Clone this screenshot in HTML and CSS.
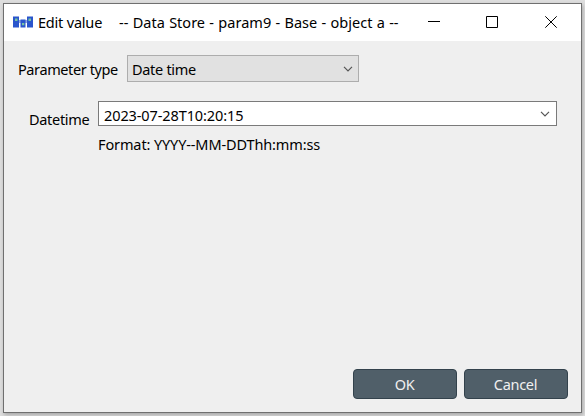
FILE: index.html
```html
<!DOCTYPE html>
<html lang="en">
<head>
<meta charset="utf-8">
<title>Edit value</title>
<link rel="stylesheet" href="styles.css">
</head>
<body>
<main class="window">
  <header class="titlebar">
    <svg class="app-icon" width="20" height="12" viewBox="0 0 20 12">
      <path d="M5 4h3v3H5zM12 4h3v3h-3z" fill="#8fa5df"/>
      <path d="M0 .5h6v11H0zM14 .5h6v11h-6zM7.500 3.500h5v8h-5z" fill="#2a55cc"/>
      <path d="M2 2.500h2.500v2.500H2zM15.500 2.500H18v2.500h-2.500zM9 7h2.300v2.200H9z" fill="#77c5a0"/>
    </svg>
    <span class="title-name">Edit value</span>
    <span class="title-detail">-- Data Store - param9 - Base - object a --</span>
    <div class="controls">
      <svg class="minimize" width="12" height="12" viewBox="0 0 12 12"><path d="M0 5.500h12"/></svg>
      <svg width="12" height="12" viewBox="0 0 12 12"><path d="M.5.500h11v11H.5z"/></svg>
      <svg width="12" height="12" viewBox="0 0 12 12"><path d="M.3.300l11.400 11.400M11.700.300L.3 11.700"/></svg>
    </div>
  </header>
  <section class="type-row">
    <span class="type-label">Parameter type</span>
    <div class="select">
      <span class="select-text">Date time</span>
      <svg class="chevron" width="10" height="6" viewBox="0 0 10 6"><path d="M1 .8l4 4 4-4"/></svg>
    </div>
  </section>
  <section class="date-row">
    <span class="date-label">Datetime</span>
    <div class="field">
      <div class="combo">
        <span class="combo-text">2023-07-28T10:20:15</span>
        <svg class="chevron" width="10" height="6" viewBox="0 0 10 6"><path d="M1 .8l4 4 4-4"/></svg>
      </div>
      <span class="hint">Format: YYYY--MM-DDThh:mm:ss</span>
    </div>
  </section>
  <footer class="actions">
    <div class="button"><span class="ok">OK</span></div>
    <div class="button"><span class="cancel">Cancel</span></div>
  </footer>
</main>
</body>
</html>
```
FILE: styles.css
```css
* { box-sizing: border-box; }
body {
  margin: 0;
  width: 585px;
  height: 416px;
  padding: 3px;
  overflow: hidden;
  background: #dedede;
  font: 14.5px/20px "Noto Sans", "Open Sans", sans-serif;
  color: #000;
}
span { white-space: nowrap; }
svg { display: block; flex: none; }
.window {
  width: 579px;
  height: 410px;
  border: 1px solid #6f6f6f;
  background: #efefef;
  box-shadow: 1px 2px 4px rgba(0, 0, 0, .25);
  display: flex;
  flex-direction: column;
}
.titlebar {
  height: 37px;
  background: #fff;
  display: flex;
  align-items: center;
  padding: 0 24px 0 9px;
}
.app-icon { margin-top: -1px; }
.title-name, .title-detail { margin-top: -2px; }
.title-name { width: 81px; margin-left: 5px; letter-spacing: -.2px; }
.title-detail { letter-spacing: .02px; word-spacing: .5px; }
.controls { display: flex; gap: 47px; margin-left: auto; margin-top: -1px; }
.controls svg { fill: none; stroke: #000; stroke-width: 1; }
.controls .minimize { margin-right: -1px; }
.type-row {
  display: flex;
  align-items: center;
  height: 27px;
  margin: 14px 0 0 14px;
}
.type-label { width: 109px; letter-spacing: -.4px; }
.select {
  width: 232px;
  height: 27px;
  border: 1px solid #adadad;
  background: #e1e1e1;
  display: flex;
  align-items: center;
  justify-content: space-between;
  padding: 0 5px 0 4px;
}
.select-text { letter-spacing: -.3px; }
.chevron { fill: none; stroke: #555; stroke-width: 1.2; }
.date-row { display: flex; margin: 19px 0 0 25px; }
.date-label { width: 69px; padding-top: 8px; letter-spacing: -.3px; }
.field { width: 459px; }
.combo {
  height: 25px;
  border: 1px solid #7a7a7a;
  background: #fff;
  display: flex;
  align-items: center;
  justify-content: space-between;
  padding: 0 6px 0 5px;
}
.combo-text { padding-top: 2px; letter-spacing: -.1px; }
.hint { display: block; margin-top: 8px; letter-spacing: -.12px; }
.actions {
  display: flex;
  gap: 7px;
  justify-content: flex-end;
  margin: auto 13px 13px 0;
}
.button {
  width: 104px;
  height: 30px;
  border: 1px solid #33424c;
  border-radius: 4px;
  background: #505f69;
  color: #f0f0f0;
  display: flex;
  align-items: center;
  justify-content: center;
  padding: 0 1px 0 0;
}
.ok, .cancel { letter-spacing: -.3px; }
```
